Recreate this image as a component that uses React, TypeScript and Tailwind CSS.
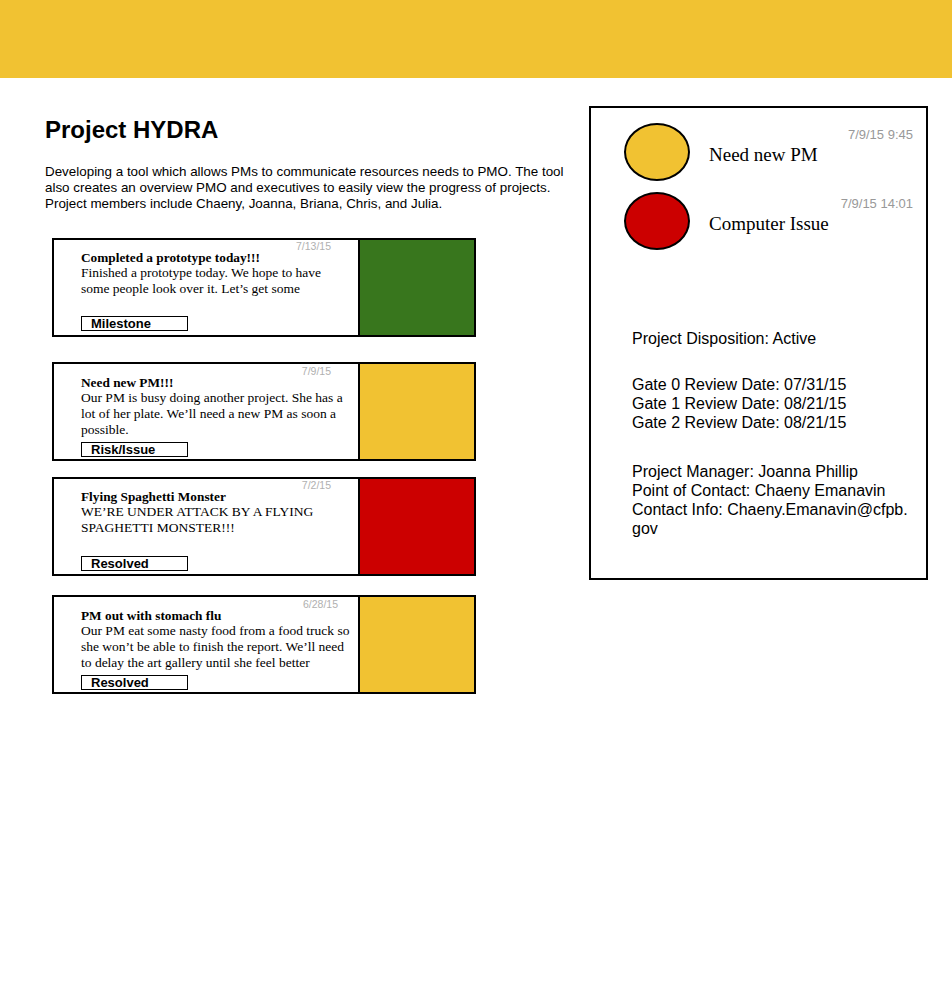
import React from "react";

type Card = {
  date: string;
  title: string;
  body: string[];
  label: string;
  color: string;
  mt: string;
  pt: string;
  pb: string;
  datePr: string;
};

const cards: Card[] = [
  {
    date: "7/13/15",
    title: "Completed a prototype today!!!",
    body: ["Finished a prototype today. We hope to have", "some people look over it. Let\u2019s get some"],
    label: "Milestone",
    color: "bg-[#38761d]",
    mt: "mt-0",
    pt: "pt-[1px]",
    pb: "pb-[4px]",
    datePr: "pr-[27px]",
  },
  {
    date: "7/9/15",
    title: "Need new PM!!!",
    body: [
      "Our PM is busy doing another project. She has a",
      "lot of her plate. We\u2019ll need a new PM as soon a",
      "possible.",
    ],
    label: "Risk/Issue",
    color: "bg-[#f1c232]",
    mt: "mt-[25px]",
    pt: "pt-[2px]",
    pb: "pb-[2px]",
    datePr: "pr-[27px]",
  },
  {
    date: "7/2/15",
    title: "Flying Spaghetti Monster",
    body: ["WE\u2019RE UNDER ATTACK BY A FLYING", "SPAGHETTI MONSTER!!!"],
    label: "Resolved",
    color: "bg-[#cc0000]",
    mt: "mt-[16px]",
    pt: "pt-[1px]",
    pb: "pb-[3px]",
    datePr: "pr-[27px]",
  },
  {
    date: "6/28/15",
    title: "PM out with stomach flu",
    body: [
      "Our PM eat some nasty food from a food truck so",
      "she won\u2019t be able to finish the report. We\u2019ll need",
      "to delay the art gallery until she feel better",
    ],
    label: "Resolved",
    color: "bg-[#f1c232]",
    mt: "mt-[19px]",
    pt: "pt-[2px]",
    pb: "pb-[2px]",
    datePr: "pr-[20px]",
  },
];

const serif = { fontFamily: '"Liberation Serif", "Times New Roman", serif' };

function UpdateCard({ c }: { c: Card }) {
  return (
    <div className={`${c.mt} ml-[7px] flex h-[99px] w-[424px] border-2 border-black bg-white`}>
      <div className={`flex w-[304px] flex-col ${c.pt} ${c.pb}`}>
        <div className={`text-right text-[10.5px] leading-[10px] text-[#b0b0b0] ${c.datePr}`}>{c.date}</div>
        <div className="pl-[27px] text-black whitespace-nowrap" style={serif}>
          <div className="text-[13.3px] font-bold leading-[14px]">{c.title}</div>
          {c.body.map((l, i) => (
            <div key={i} className="text-[13.5px] leading-[16px]">
              {l}
            </div>
          ))}
        </div>
        <div className="mt-auto ml-[27px] h-[15px] w-[107px] border border-black pl-[9px] text-[13px] font-bold leading-[13px] text-black">
          {c.label}
        </div>
      </div>
      <div className={`flex-1 border-l-2 border-black ${c.color}`} />
    </div>
  );
}

function Alert({ color, date, label, mt }: { color: string; date: string; label: string; mt: string }) {
  return (
    <div className={`flex ${mt}`}>
      <div className={`ml-[33px] h-[58px] w-[66px] rounded-[50%] border-2 border-black ${color}`} />
      <div className="flex-1 pl-[19px] pr-[13px]">
        <div className="mt-[4px] text-right text-[13px] leading-[15px] text-[#999999]">{date}</div>
        <div className="mt-[2px] text-[19px] leading-[22px] text-black" style={serif}>
          {label}
        </div>
      </div>
    </div>
  );
}

export default function App() {
  return (
    <div className="min-h-[997px] w-[952px] bg-white" style={{ fontFamily: '"Liberation Sans", Arial, sans-serif' }}>
      <div className="h-[78px] bg-[#f1c232]" />
      <div className="flex">
        <div className="w-[589px] pl-[45px]">
          <h1 className="mt-[38px] text-[24px] font-bold leading-[28px] text-black">Project HYDRA</h1>
          <p className="mt-[20px] whitespace-nowrap text-[13.4px] leading-[16px] text-black">
            Developing a tool which allows PMs to communicate resources needs to PMO. The tool
            <br />
            also creates an overview PMO and executives to easily view the progress of projects.
            <br />
            Project members include Chaeny, Joanna, Briana, Chris, and Julia.
          </p>
          <div className="mt-[26px]">
            {cards.map((c, i) => (
              <UpdateCard key={i} c={c} />
            ))}
          </div>
        </div>
        <div className="mt-[28px] h-[474px] w-[339px] border-2 border-black">
          <Alert color="bg-[#f1c232]" date="7/9/15 9:45" label="Need new PM" mt="mt-[15px]" />
          <Alert color="bg-[#cc0000]" date="7/9/15 14:01" label="Computer Issue" mt="mt-[11px]" />
          <div className="mt-[79px] pl-[41px] text-[16px] leading-[19px] text-black">
            <div>Project Disposition: Active</div>
            <div className="mt-[27px]">Gate 0 Review Date: 07/31/15</div>
            <div>Gate 1 Review Date: 08/21/15</div>
            <div>Gate 2 Review Date: 08/21/15</div>
            <div className="mt-[30px]">Project Manager: Joanna Phillip</div>
            <div>Point of Contact: Chaeny Emanavin</div>
            <div>
              Contact Info: Chaeny.Emanavin@cfpb.
              <br />
              gov
            </div>
          </div>
        </div>
      </div>
    </div>
  );
}
